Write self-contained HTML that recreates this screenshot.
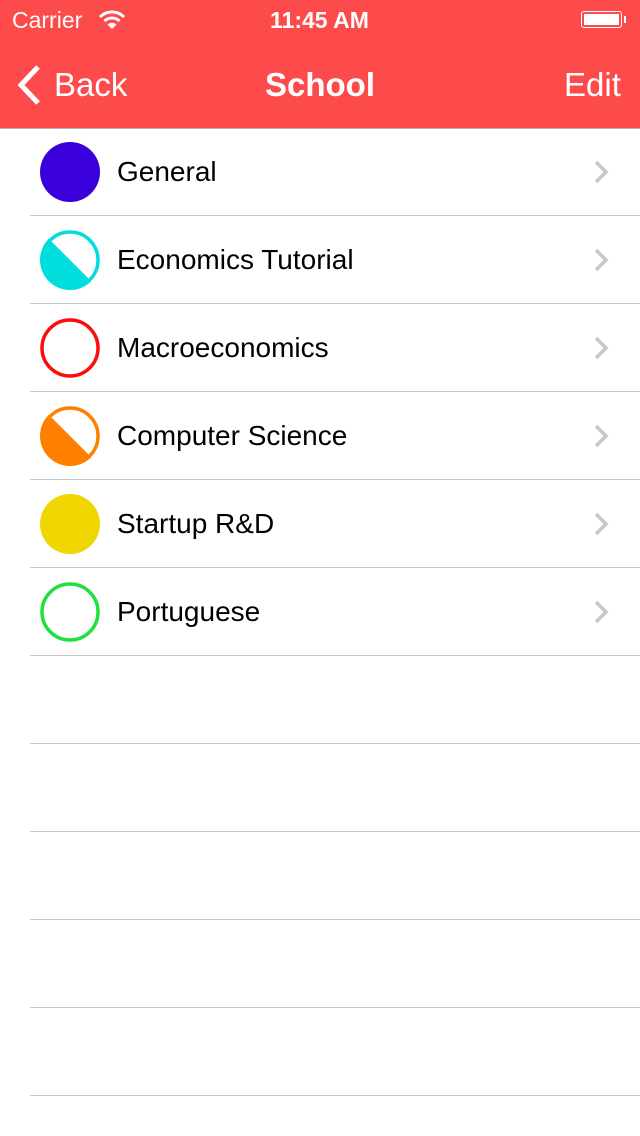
<!DOCTYPE html>
<html><head><style>
body{margin:0;width:640px;height:1136px;background:#fff;font-family:"Liberation Sans",sans-serif;position:relative;overflow:hidden}
.nav{position:absolute;left:0;top:0;width:640px;height:128px;background:#fd4a4a;color:#fff;border-bottom:1px solid #b0b0b0}
.t{position:absolute;white-space:nowrap}
.row{position:absolute;left:0;width:640px;height:88px}
.sep{position:absolute;left:30px;right:0;height:1px;background:#c8c7cc}
.lbl{position:absolute;left:117px;top:28px;font-size:28px;color:#000}
</style></head><body>
<div class="nav">
<div class="t" style="left:12px;top:7px;font-size:23px">Carrier</div>
<svg style="position:absolute;left:98px;top:10px" width="28" height="20" viewBox="0 0 28 20"><path d="M2 7 A17 17 0 0 1 26 7" stroke="#fff" stroke-width="3" fill="none"/><path d="M6.5 11 A11 11 0 0 1 21.5 11" stroke="#fff" stroke-width="3" fill="none"/><path d="M14 19 L9.5 14.5 A6.5 6.5 0 0 1 18.5 14.5 Z" fill="#fff"/></svg>
<div class="t" style="left:270px;top:7px;font-size:23px;font-weight:bold">11:45 AM</div>
<div style="position:absolute;left:581px;top:11px;width:41px;height:17px;border:1.5px solid #fff;border-radius:3px;box-sizing:border-box;padding:2px"><div style="background:#fff;width:100%;height:100%"></div></div>
<div style="position:absolute;left:624px;top:16px;width:2px;height:7px;background:#fff"></div>
<svg style="position:absolute;left:15px;top:65px" width="28" height="40" viewBox="0 0 28 40"><path d="M23 2 L6 20 L23 38" stroke="#fff" stroke-width="5" fill="none"/></svg>
<div class="t" style="left:54px;top:66px;font-size:33px">Back</div>
<div class="t" style="left:265px;top:66px;font-size:33px;font-weight:bold">School</div>
<div class="t" style="left:564px;top:66px;font-size:33px">Edit</div>
</div>
<svg width="0" height="0" style="position:absolute"><defs>
<clipPath id="h"><polygon points="0,0 60,60 0,60"/></clipPath></defs></svg>

<div class="row" style="top:128px"><svg style="position:absolute;left:40px;top:14px" width="60" height="60"><circle cx="30" cy="30" r="30" fill="#3900db"/></svg><div class="lbl">General</div></div>
<div class="row" style="top:216px"><svg style="position:absolute;left:40px;top:14px" width="60" height="60"><circle cx="30" cy="30" r="30" fill="#00dddd" clip-path="url(#h)"/><circle cx="30" cy="30" r="28" fill="none" stroke="#00dddd" stroke-width="3.5"/></svg><div class="lbl">Economics Tutorial</div></div>
<div class="row" style="top:304px"><svg style="position:absolute;left:40px;top:14px" width="60" height="60"><circle cx="30" cy="30" r="28" fill="none" stroke="#fc0d0d" stroke-width="3.5"/></svg><div class="lbl">Macroeconomics</div></div>
<div class="row" style="top:392px"><svg style="position:absolute;left:40px;top:14px" width="60" height="60"><circle cx="30" cy="30" r="30" fill="#ff8000" clip-path="url(#h)"/><circle cx="30" cy="30" r="28" fill="none" stroke="#ff8000" stroke-width="3.5"/></svg><div class="lbl">Computer Science</div></div>
<div class="row" style="top:480px"><svg style="position:absolute;left:40px;top:14px" width="60" height="60"><circle cx="30" cy="30" r="30" fill="#efd600"/></svg><div class="lbl">Startup R&amp;D</div></div>
<div class="row" style="top:568px"><svg style="position:absolute;left:40px;top:14px" width="60" height="60"><circle cx="30" cy="30" r="28" fill="none" stroke="#20e040" stroke-width="3.5"/></svg><div class="lbl">Portuguese</div></div>

<svg style="position:absolute;left:594px;top:160px" width="16" height="480">
<g stroke="#c7c7cc" stroke-width="3.5" fill="none">
<path d="M2 2 L12 12 L2 22"/><path d="M2 90 L12 100 L2 110"/><path d="M2 178 L12 188 L2 198"/><path d="M2 266 L12 276 L2 286"/><path d="M2 354 L12 364 L2 374"/><path d="M2 442 L12 452 L2 462"/></g></svg>

<div class="sep" style="top:215px"></div><div class="sep" style="top:303px"></div><div class="sep" style="top:391px"></div><div class="sep" style="top:479px"></div><div class="sep" style="top:567px"></div><div class="sep" style="top:655px"></div><div class="sep" style="top:743px"></div><div class="sep" style="top:831px"></div><div class="sep" style="top:919px"></div><div class="sep" style="top:1007px"></div><div class="sep" style="top:1095px"></div>
</body></html>
